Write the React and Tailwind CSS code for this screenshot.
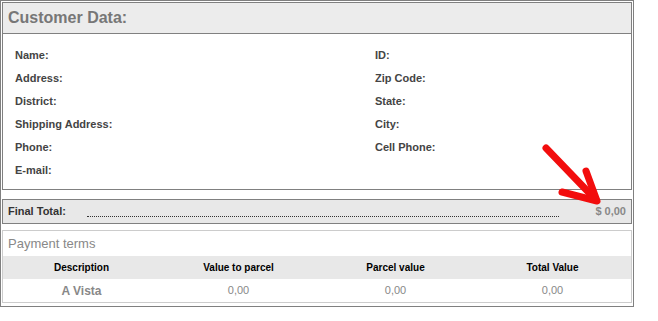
import React from 'react';

const LEFT = ['Name:', 'Address:', 'District:', 'Shipping Address:', 'Phone:', 'E-mail:'];
const RIGHT = ['ID:', 'Zip Code:', 'State:', 'City:', 'Cell Phone:', ''];
const COLS = ['Description', 'Value to parcel', 'Parcel value', 'Total Value'];

export default function App() {
  return (
    <div className="w-[658px] h-[321px] bg-white relative font-['Liberation_Sans',Arial,sans-serif]">
      <div className="w-[634px] h-[307px] border border-[#808080] p-px flex flex-col">
        {/* customer data */}
        <div className="h-[188px] shrink-0 border border-[#808080] flex flex-col">
          <div className="h-[31px] bg-[#ececec] border-b border-[#808080] flex items-center pl-[5px] text-[16px] font-bold text-[#777]">
            Customer Data:
          </div>
          <div className="flex-1 grid grid-cols-[360px_1fr] pt-[10px] pl-[12px] text-[11px] font-bold text-[#444]">
            <div className="flex flex-col">
              {LEFT.map(l => (
                <div key={l} className="h-[23px] flex items-center">{l}</div>
              ))}
            </div>
            <div className="flex flex-col">
              {RIGHT.map((l, i) => (
                <div key={i} className="h-[23px] flex items-center">{l}</div>
              ))}
            </div>
          </div>
        </div>

        {/* final total */}
        <div className="mt-[9px] h-[25px] shrink-0 border border-[#808080] bg-[#e8e8e8] flex items-center px-[5px] text-[11px]">
          <span className="font-bold text-[#333]">Final Total:</span>
          <div className="flex-1 ml-[21px] mr-[36px] mt-[9px] border-b border-dotted border-[#333]"></div>
          <span className="font-bold text-[#888]">$ 0,00</span>
        </div>

        {/* payment terms */}
        <div className="mt-[6px] h-[73px] shrink-0 border border-[#ccc] flex flex-col">
          <div className="h-[25px] flex items-center pl-[5px] text-[13px] text-[#888]">Payment terms</div>
          <div className="h-[23px] bg-[#e8e8e8] grid grid-cols-4 text-[10px] font-bold text-black">
            {COLS.map(c => (
              <div key={c} className="flex items-center justify-center">{c}</div>
            ))}
          </div>
          <div className="h-[23px] grid grid-cols-4 text-[11px] text-[#888]">
            <div className="flex items-center justify-center font-bold text-[12px]">A Vista</div>
            <div className="flex items-center justify-center">0,00</div>
            <div className="flex items-center justify-center">0,00</div>
            <div className="flex items-center justify-center">0,00</div>
          </div>
        </div>
      </div>

      {/* red arrow annotation */}
      <svg className="absolute left-[538px] top-[140px]" width="66" height="66" viewBox="0 0 66 66">
        <g stroke="#f20d0d" strokeWidth="7" strokeLinecap="round" strokeLinejoin="round" fill="none">
          <path d="M8 8 L58 60" />
          <path d="M48 31 L59 61 L24 52" />
        </g>
      </svg>
    </div>
  );
}
